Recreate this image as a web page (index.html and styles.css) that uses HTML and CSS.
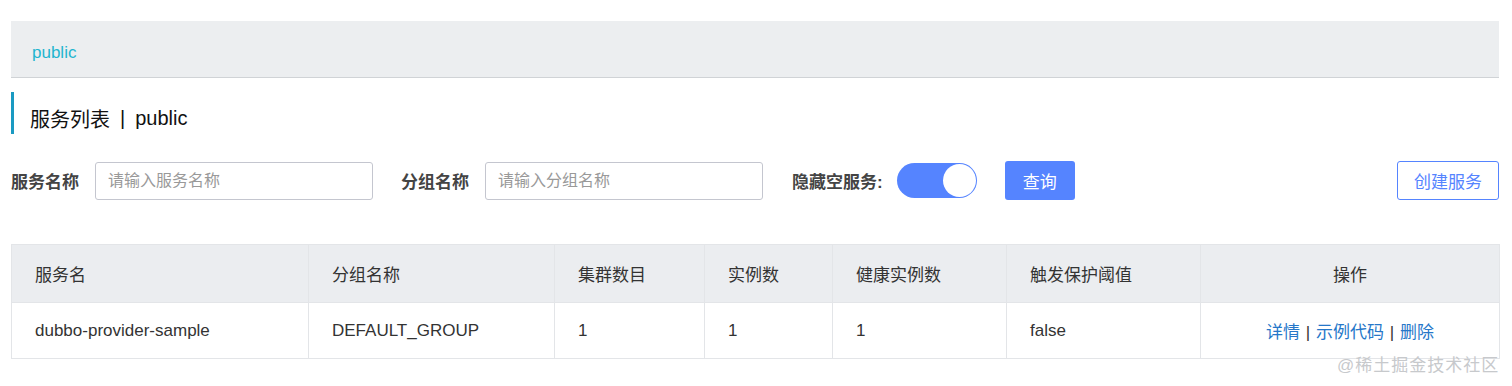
FILE: index.html
```html
<!DOCTYPE html>
<html lang="zh-CN">
<head>
    <meta charset="UTF-8">
    <meta name="viewport" content="width=device-width, initial-scale=1.0">
    <title>服务列表</title>
    <link rel="stylesheet" href="styles.css">
</head>
<body>
    <div class="page">
        <!-- Namespace bar -->
        <div class="namespace-bar">
            <span class="namespace">public</span>
        </div>

        <h1 class="page-title">服务列表 <span class="sep">|</span> public</h1>

        <!-- Search form -->
        <div class="search-row">
            <label class="field-label">服务名称</label>
            <input type="text" class="text-input" placeholder="请输入服务名称">

            <label class="field-label group-label">分组名称</label>
            <input type="text" class="text-input" placeholder="请输入分组名称">

            <label class="field-label hide-label">隐藏空服务:</label>
            <div class="switch"><span class="knob"></span></div>

            <button class="btn-primary">查询</button>
            <button class="btn-outline">创建服务</button>
        </div>

        <table class="service-table">
            <colgroup>
                <col style="width: 297px">
                <col style="width: 246px">
                <col style="width: 150px">
                <col style="width: 128px">
                <col style="width: 174px">
                <col style="width: 194px">
                <col style="width: 299px">
            </colgroup>
            <thead>
                <tr>
                    <th>服务名</th>
                    <th>分组名称</th>
                    <th>集群数目</th>
                    <th>实例数</th>
                    <th>健康实例数</th>
                    <th>触发保护阈值</th>
                    <th class="center">操作</th>
                </tr>
            </thead>
            <tbody>
                <tr>
                    <td>dubbo-provider-sample</td>
                    <td>DEFAULT_GROUP</td>
                    <td>1</td>
                    <td>1</td>
                    <td>1</td>
                    <td>false</td>
                    <td class="center ops">
                        <a href="#">详情</a> <span class="bar">|</span>
                        <a href="#">示例代码</a> <span class="bar">|</span>
                        <a href="#">删除</a>
                    </td>
                </tr>
            </tbody>
        </table>
    </div>

    <div class="watermark">@稀土掘金技术社区</div>
</body>
</html>
```

FILE: styles.css
```css
body {
    margin: 0;
    font-family: "Liberation Sans", "Noto Sans CJK SC", sans-serif;
    color: #333;
    background-color: #fff;
}

.page {
    width: 1488px;
    padding: 21px 0 0 11px;
}

.namespace-bar {
    box-sizing: border-box;
    height: 57px;
    background-color: #eceef0;
    border-bottom: 1px solid #d0d3d6;
    display: flex;
    align-items: center;
    padding: 8px 0 0 21px;
}

.namespace {
    color: #1fb5cf;
    font-size: 17px;
}

.page-title {
    box-sizing: border-box;
    margin: 14px 0 0 0;
    height: 42px;
    border-left: 3px solid #1a9ac2;
    padding: 10px 0 0 16px;
    display: flex;
    align-items: center;
    font-size: 20px;
    font-weight: normal;
    color: #111;
}

.page-title .sep {
    margin: 0 10px;
}

.search-row {
    display: flex;
    align-items: center;
    margin-top: 27px;
    height: 39px;
}

.field-label {
    font-size: 17px;
    font-weight: bold;
    color: #444;
    margin-right: 16px;
}

.group-label {
    margin-left: 28px;
}

.hide-label {
    margin-left: 29px;
    margin-right: 14px;
}

.text-input {
    box-sizing: border-box;
    width: 278px;
    height: 38px;
    padding: 0 12px;
    font-size: 16px;
    font-family: inherit;
    border: 1px solid #c4c6cf;
    border-radius: 3px;
    color: #333;
}

.text-input::placeholder {
    color: #999;
}

.switch {
    box-sizing: border-box;
    width: 80px;
    height: 35px;
    border-radius: 18px;
    background-color: #5584ff;
    display: flex;
    align-items: center;
    justify-content: flex-end;
    padding-right: 1px;
}

.knob {
    width: 33px;
    height: 33px;
    border-radius: 50%;
    background-color: #fff;
}

.btn-primary {
    margin-left: 28px;
    width: 70px;
    height: 39px;
    border: none;
    border-radius: 3px;
    background-color: #5584ff;
    color: #fff;
    font-size: 17px;
    font-family: inherit;
}

.btn-outline {
    margin-left: auto;
    width: 102px;
    height: 39px;
    border: 1px solid #5584ff;
    border-radius: 3px;
    background-color: #fff;
    color: #5584ff;
    font-size: 17px;
    font-family: inherit;
}

.service-table {
    margin-top: 44px;
    width: 1488px;
    border-collapse: collapse;
    font-size: 17px;
    table-layout: fixed;
}

.service-table th,
.service-table td {
    border: 1px solid #e3e5e8;
    text-align: left;
    padding: 0 0 0 23px;
}

.service-table th {
    height: 57px;
    background-color: #ebedf0;
    font-weight: normal;
    color: #333;
}

.service-table td {
    height: 55px;
    color: #333;
}

.service-table .center {
    text-align: center;
    padding: 0;
}

.ops a {
    color: #2677c9;
    text-decoration: none;
}

.ops .bar {
    color: #333;
    margin: 0 1px;
}

.watermark {
    position: absolute;
    top: 351px;
    left: 1337px;
    font-size: 17px;
    color: #c7c9cc;
    letter-spacing: 1px;
}
```
